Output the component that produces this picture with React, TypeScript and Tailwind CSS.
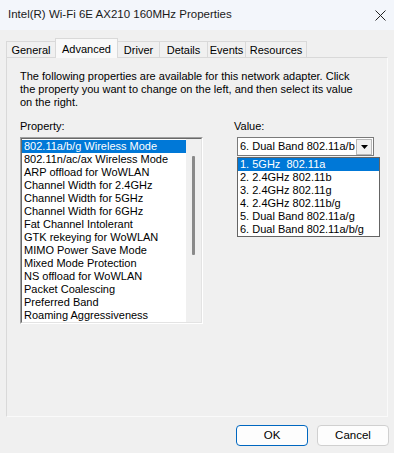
import React from 'react'

const font = { fontFamily: '"Liberation Sans", Arial, sans-serif' }

const tabs = [
  { name: 'General', w: 'w-[49px]' },
  { name: 'Advanced', w: 'w-[63px]' },
  { name: 'Driver', w: 'w-[42px]' },
  { name: 'Details', w: 'w-[48px]' },
  { name: 'Events', w: 'w-[38px]' },
  { name: 'Resources', w: 'w-[61px]' },
]

const properties = [
  '802.11a/b/g Wireless Mode',
  '802.11n/ac/ax Wireless Mode',
  'ARP offload for WoWLAN',
  'Channel Width for 2.4GHz',
  'Channel Width for 5GHz',
  'Channel Width for 6GHz',
  'Fat Channel Intolerant',
  'GTK rekeying for WoWLAN',
  'MIMO Power Save Mode',
  'Mixed Mode Protection',
  'NS offload for WoWLAN',
  'Packet Coalescing',
  'Preferred Band',
  'Roaming Aggressiveness',
]

const values = [
  '1. 5GHz\u00a0\u00a0802.11a',
  '2. 2.4GHz 802.11b',
  '3. 2.4GHz 802.11g',
  '4. 2.4GHz 802.11b/g',
  '5. Dual Band 802.11a/g',
  '6. Dual Band 802.11a/b/g',
]

const App: React.FC = () => {
  return (
    <div
      className="w-[394px] h-[453px] bg-[#f0f0f0] flex flex-col text-[11px] text-black overflow-hidden"
      style={font}
    >
      {/* title bar */}
      <div className="h-[30px] shrink-0 bg-[#f3f6fb] flex items-center justify-between pl-[8px] pr-[6px]">
        <span className="text-[11.5px] text-[#1a1a1a]">
          Intel(R) Wi-Fi 6E AX210 160MHz Properties
        </span>
        <svg width="11" height="11" viewBox="0 0 11 11" className="mr-[2px]">
          <path d="M0.5 0.5 L10.5 10.5 M10.5 0.5 L0.5 10.5" stroke="#222" strokeWidth="1" />
        </svg>
      </div>

      {/* tabs */}
      <div className="flex items-end px-[6px] h-[28px] shrink-0 -mb-px relative z-10">
        {tabs.map((t, i) =>
          t.name === 'Advanced' ? (
            <div
              key={t.name}
              className={`${t.w} h-[20px] bg-[#f9f9f9] border border-b-0 border-[#d9d9d9] flex justify-center pt-[2px]`}
            >
              {t.name}
            </div>
          ) : (
            <div
              key={t.name}
              className={
                `${t.w} h-[17px] border-t border-[#d9d9d9] flex items-center justify-center ` +
                (i === 0 ? 'border-l ' : '') +
                (i !== 0 ? 'border-r ' : '')
              }
            >
              {t.name}
            </div>
          )
        )}
      </div>

      {/* panel */}
      <div className="mx-[6px] h-[360px] shrink-0 border border-[#d9d9d9] border-b-[#fafafa] border-r-[#fafafa] px-[13px] pt-[12px]">
        <p className="leading-[13px] whitespace-nowrap">
          The following properties are available for this network adapter. Click
          <br />
          the property you want to change on the left, and then select its value
          <br />
          on the right.
        </p>

        <div className="flex mt-[11px]">
          <div className="w-[185px]">
            <div className="leading-[13px] mb-[4px]">Property:</div>
            <div className="h-[187px] border border-t-[#a0a0a0] border-l-[#a0a0a0] border-b-white border-r-white">
              <div className="h-full border border-t-[#696969] border-l-[#696969] border-b-[#e3e3e3] border-r-[#e3e3e3] bg-white flex">
                <div className="flex-1 flex flex-col pt-px">
                  {properties.map((p, i) => (
                    <div
                      key={p}
                      className={
                        'h-[13px] leading-[13px] pl-[2px] whitespace-nowrap ' +
                        (i === 0 ? 'bg-[#0078d7] text-white' : '')
                      }
                    >
                      {p}
                    </div>
                  ))}
                </div>
                <div className="w-[15px] bg-[#f0f0f0] flex justify-center pt-[17px]">
                  <div className="w-[3px] h-[99px] bg-[#8a8a8a] rounded-[1px]" />
                </div>
              </div>
            </div>
          </div>

          <div className="ml-[34px] relative">
            <div className="leading-[13px] mb-[4px] -ml-[3px]">Value:</div>
            <div className="w-[137px] h-[19px] bg-white border border-[#7a7a7a] flex items-center">
              <span className="flex-1 whitespace-nowrap pl-[2px] leading-[13px]">
                6. Dual Band 802.11a/b
              </span>
              <div className="w-[16px] h-[16px] mr-px bg-[#f0f0f0] border border-[#b8b8b8] flex items-center justify-center">
                <svg width="7" height="4" viewBox="0 0 7 4">
                  <path d="M0 0 H7 L3.5 4 Z" fill="#000" />
                </svg>
              </div>
            </div>
            <div className="absolute left-0 top-[37px] w-[143px] bg-white border border-[#646464] flex flex-col">
              {values.map((v, i) => (
                <div
                  key={v}
                  className={
                    'h-[13px] leading-[13px] pl-[2px] whitespace-nowrap ' +
                    (i === 0 ? 'bg-[#0078d7] text-white' : '')
                  }
                >
                  {v}
                </div>
              ))}
            </div>
          </div>
        </div>
      </div>

      {/* buttons */}
      <div className="flex justify-end gap-[9px] pr-[5px] mt-[8px]">
        <button className="w-[72px] h-[21px] bg-[#fdfdfd] border border-[#0067c0] rounded-[4px] text-[11.5px] leading-none">
          OK
        </button>
        <button className="w-[72px] h-[21px] bg-[#fdfdfd] border border-[#d0d0d0] rounded-[4px] text-[11.5px] leading-none">
          Cancel
        </button>
      </div>
    </div>
  )
}

export default App
